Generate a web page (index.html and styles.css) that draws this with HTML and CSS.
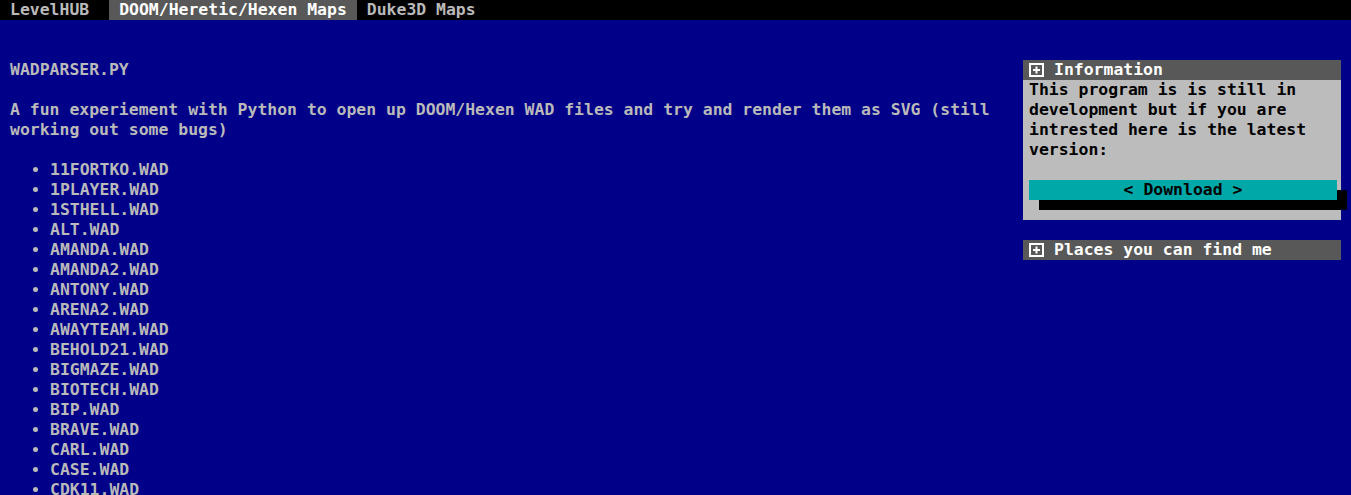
FILE: index.html
```html
<!DOCTYPE html>
<html lang="en">
<head>
<meta charset="utf-8">
<title>DOOM/Heretic/Hexen Maps - LevelHUB</title>
<link rel="stylesheet" href="styles.css">
</head>
<body>
<nav class="menubar">
  <a class="tab brand" href="#">LevelHUB</a>
  <a class="tab active" href="#">DOOM/Heretic/Hexen Maps</a>
  <a class="tab" href="#">Duke3D Maps</a>
</nav>
<div class="page">
  <main class="main">
    <p>WADPARSER.PY</p>
    <p>A fun experiement with Python to open up DOOM/Hexen WAD files and try and render them as SVG (still working out some bugs)</p>
    <ul class="wads">
      <li>11FORTKO.WAD</li>
      <li>1PLAYER.WAD</li>
      <li>1STHELL.WAD</li>
      <li>ALT.WAD</li>
      <li>AMANDA.WAD</li>
      <li>AMANDA2.WAD</li>
      <li>ANTONY.WAD</li>
      <li>ARENA2.WAD</li>
      <li>AWAYTEAM.WAD</li>
      <li>BEHOLD21.WAD</li>
      <li>BIGMAZE.WAD</li>
      <li>BIOTECH.WAD</li>
      <li>BIP.WAD</li>
      <li>BRAVE.WAD</li>
      <li>CARL.WAD</li>
      <li>CASE.WAD</li>
      <li>CDK11.WAD</li>
    </ul>
  </main>
  <aside class="side">
    <section class="panel">
      <div class="panel-head">
        <span class="plus"><svg viewBox="0 0 15 14" width="15" height="14"><rect x="1" y="1" width="13" height="12" fill="none" stroke="#fff" stroke-width="2"/><path d="M7.5 3.5v7M4 7h7" stroke="#fff" stroke-width="2"/></svg></span>
        <span>Information</span>
      </div>
      <div class="panel-body">
        <p>This program is is still in development but if you are intrested here is the latest version:</p>
        <a class="btn" href="#">&lt; Download &gt;</a>
      </div>
    </section>
    <section class="panel">
      <div class="panel-head">
        <span class="plus"><svg viewBox="0 0 15 14" width="15" height="14"><rect x="1" y="1" width="13" height="12" fill="none" stroke="#fff" stroke-width="2"/><path d="M7.5 3.5v7M4 7h7" stroke="#fff" stroke-width="2"/></svg></span>
        <span>Places you can find me</span>
      </div>
    </section>
  </aside>
</div>
</body>
</html>
```

FILE: styles.css
```css
html, body {
  margin: 0;
  padding: 0;
}

body {
  background: #000088;
  color: #bababa;
  font-family: "DejaVu Sans Mono", "Liberation Mono", monospace;
  font-size: 16.45px;
  font-weight: bold;
  line-height: 20px;
}

.menubar {
  display: flex;
  height: 20px;
  background: #000;
}

.tab {
  display: block;
  padding: 0 10px;
  color: #bababa;
  text-decoration: none;
  white-space: nowrap;
}

.brand {
  margin-right: 10px;
}

.tab.active {
  background: #585858;
  color: #fff;
}

.page {
  display: flex;
  align-items: flex-start;
  gap: 20px;
  padding: 40px 10px 0;
}

.main {
  flex: 1;
  min-width: 0;
}

.main p {
  margin: 0 0 20px;
}

.wads {
  margin: 0;
  padding-left: 40px;
}

.side {
  flex: 0 0 318px;
  display: flex;
  flex-direction: column;
  gap: 20px;
}

.panel-head {
  display: flex;
  align-items: center;
  height: 20px;
  padding-left: 6px;
  background: #585858;
  color: #fff;
}

.plus {
  display: flex;
  width: 15px;
  height: 14px;
  margin-right: 10px;
}

.panel-body {
  background: #bcbcbc;
  color: #000;
  padding: 0 4px 20px 6px;
}

.panel-body p {
  margin: 0 0 20px;
}

.btn {
  display: block;
  background: #00a8a8;
  color: #000;
  text-align: center;
  text-decoration: none;
  box-shadow: 10px 10px 0 #000;
}
```
